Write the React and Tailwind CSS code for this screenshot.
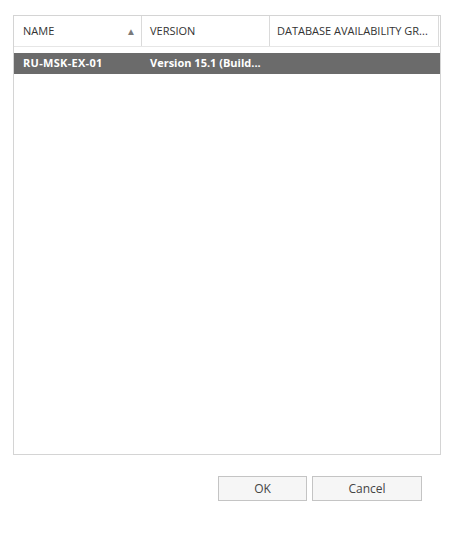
export default function App() {
  const font = { fontFamily: '"Open Sans", "Noto Sans", sans-serif' }

  return (
    <div className="w-[454px] h-[534px] bg-white relative" style={font}>
      {/* list box */}
      <div className="absolute left-[13px] top-[15px] w-[428px] h-[440px] border border-[#d4d4d4] bg-white">
        {/* header */}
        <div className="flex h-[31px] border-b border-[#e6e6e6] text-[11px] text-[#333] items-stretch">
          <div className="w-[128px] flex items-center justify-between pl-[9px] pr-[5px] border-r border-[#dadada]">
            <span>NAME</span>
            <span className="text-[10px] text-[#7a7a7a]">▲</span>
          </div>
          <div className="w-[128px] flex items-center pl-[8px] border-r border-[#dadada]">
            <span>VERSION</span>
          </div>
          <div className="w-[169px] flex items-center pl-[7px] border-r border-[#dadada] whitespace-nowrap">
            <span>DATABASE AVAILABILITY GR...</span>
          </div>
        </div>

        {/* selected row */}
        <div className="mt-[6px] flex h-[21px] items-center bg-[#6b6b6b] text-white text-[11px] font-bold">
          <div className="w-[128px] pl-[9px] tracking-[0.3px]">RU-MSK-EX-01</div>
          <div className="w-[128px] pl-[8px] whitespace-nowrap">Version 15.1 (Build...</div>
          <div className="flex-1" />
        </div>
      </div>

      {/* buttons */}
      <div className="absolute left-[218px] top-[476px] flex gap-[5px] text-[12px] text-[#444]">
        <button className="w-[89px] h-[25px] border border-[#c4c4c4] bg-[#f6f6f6]">OK</button>
        <button className="w-[110px] h-[25px] border border-[#c4c4c4] bg-[#f6f6f6]">Cancel</button>
      </div>
    </div>
  )
}
